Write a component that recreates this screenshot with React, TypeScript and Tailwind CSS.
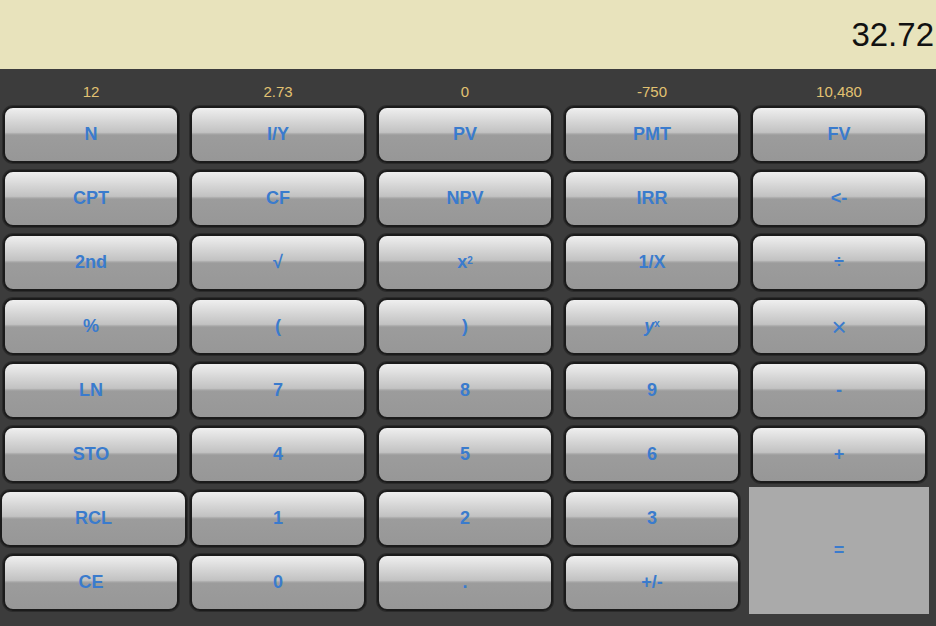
import React from "react";

const registers = ["12", "2.73", "0", "-750", "10,480"];

// 0-6 rows of five keys; last two rows handled with the tall "=" key
const keyRows: React.ReactNode[][] = [
  ["N", "I/Y", "PV", "PMT", "FV"],
  ["CPT", "CF", "NPV", "IRR", "<-"],
  [
    "2nd",
    "√",
    <span key="x2">
      x<sup className="text-[10px] -top-[0.4em]">2</sup>
    </span>,
    "1/X",
    "÷",
  ],
  [
    "%",
    "(",
    ")",
    <span key="yx" className="italic">
      y<sup className="text-[10px] not-italic -top-[0.5em]">x</sup>
    </span>,
    <span key="mul" className="font-normal text-[26px] leading-none">×</span>,
  ],
  ["LN", "7", "8", "9", "-"],
  ["STO", "4", "5", "6", "+"],
];

function Key({ children, className = "" }: { children: React.ReactNode; className?: string }) {
  return (
    <button
      className={
        "h-[57px] flex items-center justify-center rounded-[10px] border-2 border-[#1b1b1b] shadow-[0_0_0_1px_#2b2b2b] bg-[linear-gradient(to_bottom,#efefef_0%,#d6d6d6_25%,#c2c2c2_46%,#b0b0b0_48%,#9c9c9c_51%,#979797_100%)] text-[#3a7bcd] text-[18px] font-bold " +
        className
      }
    >
      {children}
    </button>
  );
}

export default function App() {
  return (
    <div className="w-[936px] h-[626px] bg-[#3c3c3c] overflow-hidden" style={{ fontFamily: '"Liberation Sans", Arial, sans-serif' }}>
      {/* 표시창 */}
      <div className="h-[69px] bg-[#e8e3bc] flex items-center justify-end pr-[2px]">
        <span className="text-[33px] text-[#111] leading-none">32.72</span>
      </div>

      {/* 레지스터 값 */}
      <div className="grid grid-cols-[repeat(5,176px)] gap-x-[11px] px-[3px] h-[37px] items-center pt-[10px]">
        {registers.map((r) => (
          <div key={r} className="text-center text-[15px] text-[#e2c272]">
            {r}
          </div>
        ))}
      </div>

      <div className="grid grid-cols-[repeat(5,176px)] gap-x-[11px] gap-y-[7px] px-[3px]">
        {keyRows.map((row, ri) =>
          row.map((label, ci) => <Key key={`${ri}-${ci}`}>{label}</Key>)
        )}

        <Key className="-ml-[3px] -mr-[8px]">RCL</Key>
        <Key>1</Key>
        <Key>2</Key>
        <Key>3</Key>
        <div className="row-span-2 -mx-[2px] -my-[3px] bg-[#aaaaaa] flex items-center justify-center text-[#3a7bcd] text-[18px] font-bold">
          =
        </div>

        <Key>CE</Key>
        <Key>0</Key>
        <Key>.</Key>
        <Key>+/-</Key>
      </div>
    </div>
  );
}
